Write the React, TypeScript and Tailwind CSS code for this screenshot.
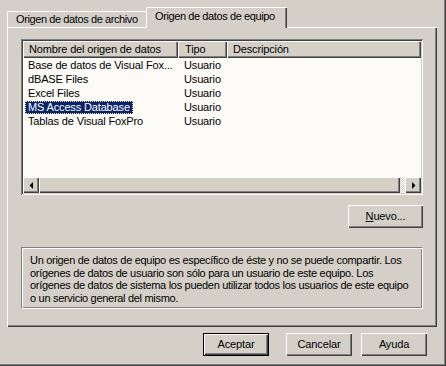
import React from "react";

const raised =
  "shadow-[inset_1px_1px_#ffffff,inset_-1px_-1px_#404040,inset_-2px_-2px_#808080]";

function Arrow({ dir }: { dir: "left" | "right" }) {
  return (
    <svg width="4" height="7" viewBox="0 0 4 7" className="block">
      {dir === "left" ? (
        <polygon points="4,0 4,7 0.5,3.5" fill="#000" />
      ) : (
        <polygon points="0,0 0,7 3.5,3.5" fill="#000" />
      )}
    </svg>
  );
}

const rows = [
  { name: "Base de datos de Visual Fox...", type: "Usuario" },
  { name: "dBASE Files", type: "Usuario" },
  { name: "Excel Files", type: "Usuario" },
  { name: "MS Access Database", type: "Usuario", selected: true },
  { name: "Tablas de Visual FoxPro", type: "Usuario" },
];

const info = [
  "Un origen de datos de equipo es específico de éste y no se puede compartir. Los",
  "orígenes de datos de usuario son sólo para un usuario de este equipo. Los",
  "orígenes de datos de sistema los pueden utilizar todos los usuarios de este equipo",
  "o un servicio general del mismo.",
];

function Button({ label, underline, isDefault, width }: { label: string; underline?: boolean; isDefault?: boolean; width: string }) {
  const text = underline ? (
    <>
      <span className="underline underline-offset-[1px]">{label[0]}</span>
      {label.slice(1)}
    </>
  ) : (
    label
  );
  return (
    <div
      className={`${width} h-[23px] flex items-center justify-center ${
        isDefault ? "border border-black" : ""
      } ${raised}`}
    >
      {text}
    </div>
  );
}

export default function App() {
  return (
    <div className="w-[446px] h-[366px] bg-[#d4d0c8] pl-[7px] pt-[7px] text-[11px] tracking-[-0.15px] text-black font-['Liberation_Sans',Arial,sans-serif] shadow-[inset_-1px_-1px_#404040,inset_-2px_-2px_#808080] overflow-hidden">
      {/* tabs */}
      <div className="flex items-end h-[20px] tracking-[-0.4px]">
        <div className="w-[141px] h-[16px] border-t border-l border-white rounded-tl-[2px] pl-[8px] leading-[15px] whitespace-nowrap">
          Origen de datos de archivo
        </div>
        <div className="relative z-10 -ml-[2px] -mb-[1px] w-[141px] h-[21px] bg-[#d4d0c8] border-t border-l border-white rounded-tl-[2px] shadow-[inset_-1px_0_#404040,inset_-2px_0_#808080] pl-[8px] pt-[1px] leading-[15px] whitespace-nowrap">
          Origen de datos de equipo
        </div>
      </div>

      {/* panel */}
      <div className="w-[430px] h-[300px] pl-[14px] pt-[12px] flex flex-col shadow-[inset_1px_1px_#ffffff,inset_-1px_-1px_#404040,inset_-2px_-2px_#808080]">
        {/* list view */}
        <div className="w-[402px] h-[156px] p-[2px] bg-[#fcfbf7] flex flex-col shadow-[inset_1px_1px_#808080,inset_-1px_-1px_#ffffff,inset_2px_2px_#404040,inset_-2px_-2px_#d4d0c8]">
          <div className="flex h-[17px] bg-[#d4d0c8] leading-[16px]">
            <div className={`w-[155px] pl-[6px] ${raised}`}>Nombre del origen de datos</div>
            <div className={`w-[49px] pl-[7px] ${raised}`}>Tipo</div>
            <div className={`flex-1 pl-[6px] ${raised}`}>Descripción</div>
          </div>
          <div className="flex-1 pt-[1px]">
            {rows.map((r) => (
              <div key={r.name} className="flex h-[14px] leading-[13px]">
                <div className="w-[155px] pl-[2px] overflow-hidden whitespace-nowrap">
                  <span
                    className={`inline-block px-[3px] h-[13px] ${
                      r.selected
                        ? "bg-[#0a246a] text-white outline-1 outline-dotted outline-[#f5db95] -outline-offset-1"
                        : ""
                    }`}
                  >
                    {r.name}
                  </span>
                </div>
                <div className="w-[49px] pl-[6px]">{r.type}</div>
              </div>
            ))}
          </div>
          {/* scrollbar */}
          <div className="flex h-[16px]">
            <div className={`w-[16px] h-[16px] bg-[#d4d0c8] flex items-center justify-center ${raised}`}>
              <Arrow dir="left" />
            </div>
            <div className={`w-[361px] bg-[#d4d0c8] ${raised}`} />
            <div className="flex-1 bg-[repeating-conic-gradient(#ffffff_0_25%,#d4d0c8_0_50%)] bg-[length:2px_2px]" />
            <div className={`w-[16px] h-[16px] bg-[#d4d0c8] flex items-center justify-center pl-[1px] ${raised}`}>
              <Arrow dir="right" />
            </div>
          </div>
        </div>

        {/* Nuevo */}
        <div className="w-[402px] flex justify-end mt-[10px]">
          <Button label="Nuevo..." underline width="w-[75px]" />
        </div>

        {/* info */}
        <div className="mt-[19px] w-[402px] h-[62px] border border-t-[#808080] border-l-[#808080] border-b-white border-r-white shadow-[inset_1px_1px_#ffffff,inset_-1px_-1px_#808080] pl-[8px] pt-[6px] leading-[12.5px] tracking-[-0.3px] whitespace-nowrap overflow-hidden">
          {info.map((line) => (
            <div key={line}>{line}</div>
          ))}
        </div>
      </div>

      {/* bottom buttons */}
      <div className="w-[430px] flex justify-end pr-[10px] mt-[6px]">
        <Button label="Aceptar" isDefault width="w-[66px]" />
        <div className="w-[17px]" />
        <Button label="Cancelar" width="w-[66px]" />
        <div className="w-[9px]" />
        <Button label="Ayuda" width="w-[66px]" />
      </div>
    </div>
  );
}
